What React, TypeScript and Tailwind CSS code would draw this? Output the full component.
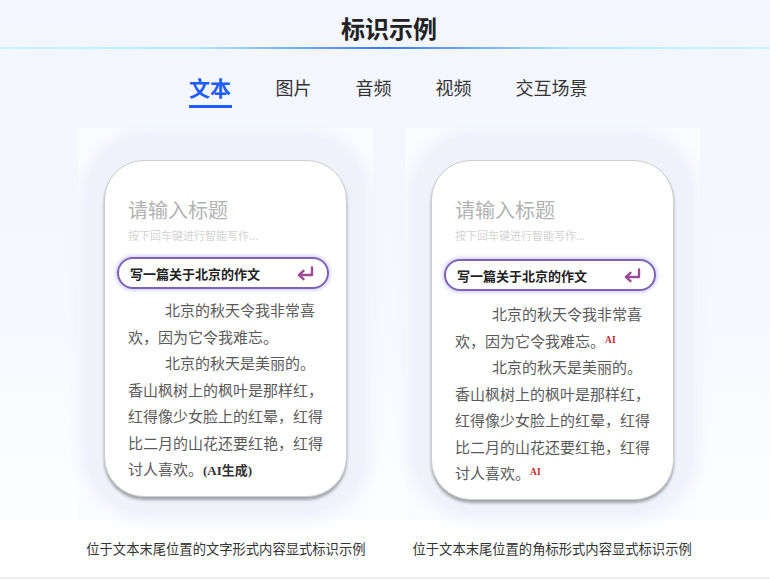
import React from "react";

const FONT = "font-['Noto_Sans_CJK_SC','Noto_Sans',sans-serif]";

function ReturnIcon() {
  return (
    <svg width="20" height="17" viewBox="0 0 20 17" fill="none">
      <path d="M17 2.5 V10 H4" stroke="#9b4c97" strokeWidth="2.4" strokeLinecap="round" strokeLinejoin="round" />
      <path d="M8.5 5.8 L4 10 L8.5 14.2" stroke="#9b4c97" strokeWidth="2.4" strokeLinecap="round" strokeLinejoin="round" />
    </svg>
  );
}

function AiMark() {
  return (
    <span className="relative top-[-4px] text-[9.5px] leading-none font-bold text-[#c7282e] font-['Liberation_Serif',serif]">
      AI
    </span>
  );
}

function Card({ variant }: { variant: "text" | "badge" }) {
  const line = "h-[26.5px] leading-[26.5px] whitespace-nowrap";
  return (
    <div className="w-[295px] h-[392px] bg-[#fbfcff] flex items-center justify-center">
      <div className="w-[280px] h-[380px] rounded-[62px] bg-[#eff2fb] shadow-[0_0_14px_6px_#eff2fb] flex items-center justify-center">
        <div
          className={`w-[243px] ${variant === "text" ? "h-[337px] mt-[9px]" : "h-[340px] mt-[12px]"} rounded-[40px] bg-white border border-[#cdcdcd] shadow-[0_3px_3px_rgba(0,0,0,0.32)] flex flex-col`}
        >
          <div className="pl-[23px] pt-[37px] text-[20px] leading-[24px] text-[#b3b3b3]">请输入标题</div>
          <div className="pl-[23px] mt-[6px] text-[11px] leading-[14px] text-[#d3d3d3]">按下回车键进行智能写作...</div>
          <div className={`ml-[12px] ${variant === "text" ? "mt-[15px]" : "mt-[17px]"} w-[212px] h-[32px] rounded-full border-2 border-[#7c63b3] shadow-[0_0_4px_1px_#c7c2ff] flex items-center justify-between pl-[11px] pr-[12px]`}>
            <span className="text-[13px] font-bold text-[#222] leading-none">写一篇关于北京的作文</span>
            <ReturnIcon />
          </div>
          <div className={`pl-[23px] ${variant === "text" ? "mt-[8px]" : "mt-[10px]"} text-[15px] text-[#5a5a5a]`}>
            <div className={`${line} pl-[37px]`}>北京的秋天令我非常喜</div>
            <div className={line}>
              欢，因为它令我难忘。{variant === "badge" && <AiMark />}
            </div>
            <div className={`${line} pl-[37px]`}>北京的秋天是美丽的。</div>
            <div className={line}>香山枫树上的枫叶是那样红，</div>
            <div className={line}>红得像少女脸上的红晕，红得</div>
            <div className={line}>比二月的山花还要红艳，红得</div>
            <div className={line}>
              讨人喜欢。
              {variant === "text" ? (
                <span className="text-[13px] font-bold text-[#333]">
                  <span className="font-['Liberation_Serif',serif]">(AI</span>生成<span className="font-['Liberation_Serif',serif]">)</span>
                </span>
              ) : (
                <AiMark />
              )}
            </div>
          </div>
        </div>
      </div>
    </div>
  );
}

export default function App() {
  const tabs = ["图片", "音频", "视频", "交互场景"];
  return (
    <div className={`w-[770px] h-[579px] flex flex-col bg-gradient-to-b from-[#f3f6fe] via-[#f6f8fe] to-white ${FONT}`}>
      <div className="h-[47px] pt-[14px] pl-[8px] text-center text-[24px] leading-[27px] font-bold text-[#222]">标识示例</div>
      <div className="h-[2px] bg-[linear-gradient(90deg,#cdf6ff_0%,#b3e9ff_25%,#3a76ff_50%,#b3e9ff_75%,#cdf6ff_100%)]" />
      <div className="flex justify-center pl-[6px] pt-[25px] gap-[44px]">
        <div className="flex flex-col items-center">
          <span className="text-[21px] leading-[26px] font-bold text-[#1d5cff]">文本</span>
          <span className="mt-[5px] w-[43px] h-[3px] bg-[#1d5cff]" />
        </div>
        {tabs.map((t) => (
          <span key={t} className="text-[18px] leading-[26px] text-[#333]">
            {t}
          </span>
        ))}
      </div>
      <div className="flex justify-center gap-[32px] pl-[8px] mt-[20px]">
        <Card variant="text" />
        <Card variant="badge" />
      </div>
      <div className="flex justify-center gap-[47px] pl-[8px] mt-[20px]">
        <span className="text-[13.3px] leading-[18px] text-[#333]">位于文本末尾位置的文字形式内容显式标识示例</span>
        <span className="text-[13.3px] leading-[18px] text-[#333]">位于文本末尾位置的角标形式内容显式标识示例</span>
      </div>
      <div className="mt-auto h-[2px] bg-[#ececec]" />
    </div>
  );
}
